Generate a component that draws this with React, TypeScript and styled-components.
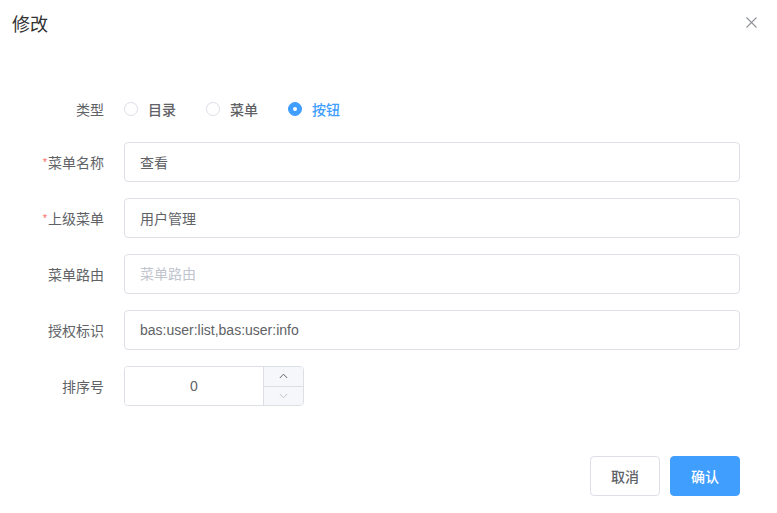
import React from "react";
import styled, { createGlobalStyle } from "styled-components";

const GlobalStyle = createGlobalStyle`
  html, body {
    margin: 0;
    padding: 0;
    background: #fff;
  }
  body {
    font-family: "Liberation Sans", "Noto Sans CJK SC", sans-serif;
    color: #606266;
  }
  * {
    box-sizing: border-box;
  }
`;

const Dialog = styled.div`
  width: 777px;
  height: 513px;
  display: flex;
  flex-direction: column;
  background: #fff;
`;

const Header = styled.header`
  display: flex;
  justify-content: space-between;
  align-items: flex-start;
  padding: 12px 20px 0 12px;
`;

const Title = styled.span`
  font-size: 18px;
  line-height: 26px;
  color: #303133;
`;

const CloseButton = styled.button`
  border: none;
  background: none;
  padding: 0;
  margin-top: 4px;
  width: 12px;
  height: 12px;
  display: flex;
  align-items: center;
  justify-content: center;
  cursor: pointer;
`;

const Form = styled.form`
  display: flex;
  flex-direction: column;
  gap: 16px;
  margin-top: 54px;
  padding-right: 37px;
`;

const Row = styled.div<{ $height?: number }>`
  display: flex;
  align-items: center;
  height: ${p => p.$height ?? 40}px;
`;

const Label = styled.label`
  width: 104px;
  flex-shrink: 0;
  text-align: right;
  font-size: 14px;
  color: #606266;
  margin-right: 20px;
`;

const Required = styled.span`
  color: #f56c6c;
  font-size: 11px;
  margin-right: 1px;
  vertical-align: 2px;
`;

const RadioGroup = styled.div`
  display: flex;
  align-items: center;
  gap: 30px;
`;

const RadioItem = styled.label<{ $checked?: boolean }>`
  display: flex;
  align-items: center;
  gap: 10px;
  font-size: 14px;
  font-weight: 500;
  color: ${p => (p.$checked ? "#409eff" : "#606266")};
  cursor: pointer;
`;

const RadioDot = styled.span<{ $checked?: boolean }>`
  width: 14px;
  height: 14px;
  border-radius: 50%;
  border: 1px solid ${p => (p.$checked ? "#409eff" : "#dcdfe6")};
  background: ${p => (p.$checked ? "#409eff" : "#fff")};
  display: flex;
  align-items: center;
  justify-content: center;
  &::after {
    content: "";
    width: 4px;
    height: 4px;
    border-radius: 50%;
    background: #fff;
    display: ${p => (p.$checked ? "block" : "none")};
  }
`;

const TextInput = styled.input`
  flex: 1;
  height: 40px;
  border: 1px solid #dcdfe6;
  border-radius: 4px;
  padding: 0 15px;
  font-family: inherit;
  font-size: 14px;
  color: #606266;
  outline: none;
  &::placeholder {
    color: #c0c4cc;
  }
`;

const NumberBox = styled.div`
  width: 180px;
  height: 40px;
  display: flex;
  border: 1px solid #dcdfe6;
  border-radius: 4px;
  overflow: hidden;
`;

const NumberInput = styled.input`
  flex: 1;
  min-width: 0;
  border: none;
  outline: none;
  text-align: center;
  font-family: inherit;
  font-size: 14px;
  color: #606266;
`;

const Controls = styled.div`
  width: 40px;
  display: flex;
  flex-direction: column;
  border-left: 1px solid #dcdfe6;
  background: #f5f7fa;
`;

const Step = styled.span<{ $last?: boolean }>`
  flex: 1;
  display: flex;
  align-items: center;
  justify-content: center;
  border-bottom: ${p => (p.$last ? "none" : "1px solid #dcdfe6")};
`;

const Footer = styled.footer`
  display: flex;
  justify-content: flex-end;
  gap: 10px;
  margin-top: 50px;
  padding-right: 37px;
`;

const Button = styled.button<{ $primary?: boolean }>`
  height: 40px;
  padding: 0 20px;
  border-radius: 4px;
  font-family: inherit;
  font-size: 14px;
  font-weight: 500;
  border: 1px solid ${p => (p.$primary ? "#409eff" : "#dcdfe6")};
  background: ${p => (p.$primary ? "#409eff" : "#fff")};
  color: ${p => (p.$primary ? "#fff" : "#606266")};
  cursor: pointer;
`;

const Chevron = ({ up, color }: { up?: boolean; color: string }) => (
  <svg width="9" height="6" viewBox="0 0 9 6">
    <path
      d={up ? "M0.8 5 L4.5 1.2 L8.2 5" : "M0.8 1 L4.5 4.8 L8.2 1"}
      fill="none"
      stroke={color}
      strokeWidth="1"
    />
  </svg>
);

const types = ["目录", "菜单", "按钮"];

export default function App() {
  return (
    <Dialog>
      <GlobalStyle />
      <Header>
        <Title>修改</Title>
        <CloseButton aria-label="close">
          <svg width="11" height="11" viewBox="0 0 11 11">
            <path d="M0.5 0.5 L10.5 10.5 M10.5 0.5 L0.5 10.5" stroke="#909399" strokeWidth="1.1" />
          </svg>
        </CloseButton>
      </Header>
      <Form>
        <Row $height={34}>
          <Label>类型</Label>
          <RadioGroup>
            {types.map((t, i) => (
              <RadioItem key={t} $checked={i === 2}>
                <RadioDot $checked={i === 2} />
                {t}
              </RadioItem>
            ))}
          </RadioGroup>
        </Row>
        <Row>
          <Label><Required>*</Required>菜单名称</Label>
          <TextInput defaultValue="查看" />
        </Row>
        <Row>
          <Label><Required>*</Required>上级菜单</Label>
          <TextInput defaultValue="用户管理" />
        </Row>
        <Row>
          <Label>菜单路由</Label>
          <TextInput placeholder="菜单路由" />
        </Row>
        <Row>
          <Label>授权标识</Label>
          <TextInput defaultValue="bas:user:list,bas:user:info" />
        </Row>
        <Row>
          <Label>排序号</Label>
          <NumberBox>
            <NumberInput defaultValue="0" />
            <Controls>
              <Step><Chevron up color="#606266" /></Step>
              <Step $last><Chevron color="#c0c4cc" /></Step>
            </Controls>
          </NumberBox>
        </Row>
      </Form>
      <Footer>
        <Button type="button">取消</Button>
        <Button type="button" $primary>确认</Button>
      </Footer>
    </Dialog>
  );
}
